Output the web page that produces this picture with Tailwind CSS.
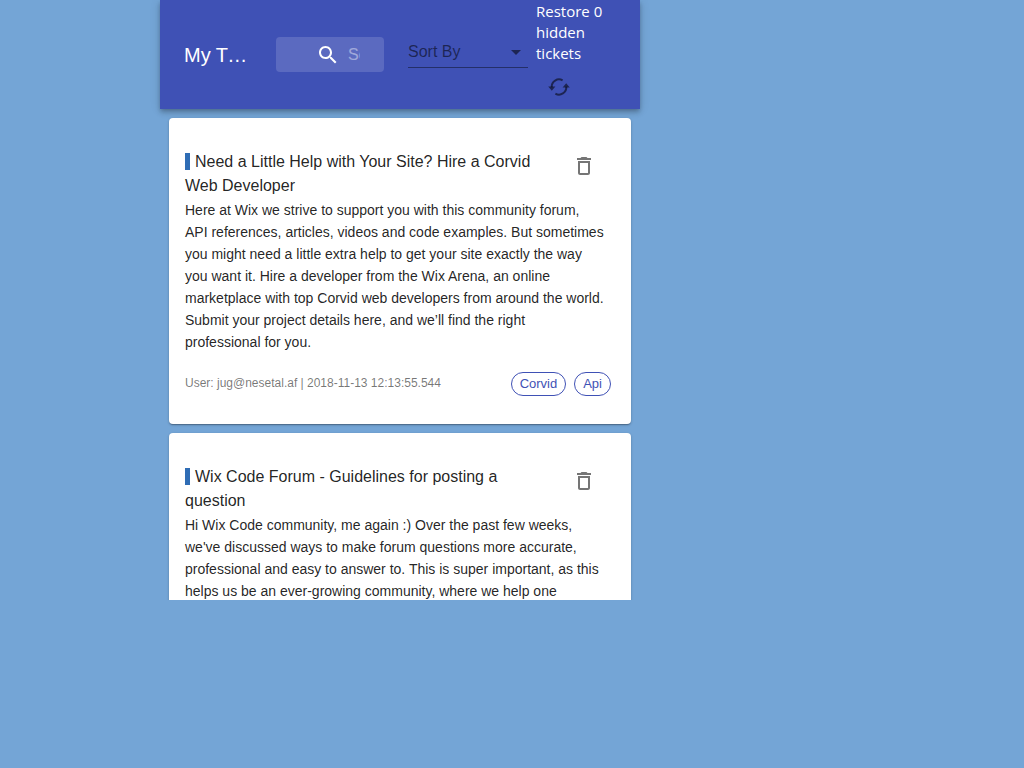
<!DOCTYPE html>
<html lang="en">
<head>
<meta charset="utf-8">
<meta name="viewport" content="width=device-width, initial-scale=1">
<title>My Tickets</title>
<script src="https://cdn.jsdelivr.net/npm/@tailwindcss/browser@4"></script>
</head>
<body class="min-h-screen bg-[#74a5d6] font-['Liberation_Sans',Arial,sans-serif] text-black/87 sm:pl-40">
<div class="max-h-[600px] w-full max-w-[480px] overflow-y-clip">
  <header class="relative z-10 flex items-center bg-[#3f51b5] px-6 text-white shadow-[0_2px_4px_-1px_rgba(0,0,0,0.2),0_4px_5px_0_rgba(0,0,0,0.14),0_1px_10px_0_rgba(0,0,0,0.12)]">
    <h1 class="w-[66px] truncate text-xl">My Tickets</h1>
    <label class="ml-[26px] flex h-[35px] min-w-0 flex-1 items-center gap-2 rounded bg-white/15 pr-6 pl-10">
      <svg class="size-6 shrink-0" viewBox="0 0 24 24" fill="currentColor" aria-hidden="true"><path d="M15.5 14h-.79l-.28-.27C15.41 12.59 16 11.11 16 9.5 16 5.91 13.09 3 9.5 3S3 5.91 3 9.5 5.91 16 9.5 16c1.61 0 3.09-.59 4.23-1.57l.27.28v.79l5 4.99L20.49 19l-4.99-5zm-6 0C7.01 14 5 11.99 5 9.5S7.01 5 9.5 5 14 7.01 14 9.5 11.99 14 9.5 14z"/></svg>
      <input type="text" aria-label="Search tickets" placeholder="Search…" class="w-0 min-w-0 flex-1 appearance-none bg-transparent text-base text-white outline-none placeholder:text-white/42">
    </label>
    <div class="relative mb-[5px] ml-6 w-[120px]">
      <select aria-label="Sort By" class="block h-8 w-full appearance-none border-b border-black/42 bg-transparent text-base text-black/54 outline-none">
        <option>Sort By</option>
      </select>
      <svg class="pointer-events-none absolute top-1 right-0 size-6 text-black/54" viewBox="0 0 24 24" fill="currentColor" aria-hidden="true"><path d="M7 10l5 5 5-5z"/></svg>
    </div>
    <div class="ml-2 w-20 pt-px font-['Open_Sans','Noto_Sans',sans-serif] text-[15px] leading-[21px]">
      <p>Restore 0 hidden tickets</p>
      <button type="button" aria-label="Restore hidden tickets" class="flex h-[45px] w-[46px] items-center justify-center rounded-full text-black/54">
        <svg class="size-[22px]" viewBox="0 0 22 22" fill="none" aria-hidden="true">
          <path d="M14.600 4.400A7.300 7.300 0 0 0 3.700 11.200M7.400 17.600A7.300 7.300 0 0 0 18.300 10.800" stroke="currentColor" stroke-width="2"/>
          <path d="M.2 10.500h7.200l-3.600 4.300zM14.600 11.500h7.200l-3.600-4.300z" fill="currentColor"/>
        </svg>
      </button>
    </div>
  </header>
  <main class="flex flex-col gap-[9px] p-[9px]">
    <article class="rounded bg-white px-4 pt-6 pb-7 shadow-[0_1px_3px_0_rgba(0,0,0,0.2),0_1px_1px_0_rgba(0,0,0,0.14),0_2px_1px_-1px_rgba(0,0,0,0.12)]">
      <div class="flex items-start">
        <h2 class="min-w-0 flex-1 pt-2 text-base"><span class="border-l-[5px] border-[#2f6db5] pl-[5px]">Need a Little Help with Your Site? Hire a Corvid<br>Web Developer</span></h2>
        <button type="button" aria-label="Delete ticket" class="mr-[7px] flex size-12 shrink-0 items-center justify-center rounded-full text-black/54">
          <svg class="size-6" viewBox="0 0 24 24" fill="currentColor" aria-hidden="true"><path d="M6 19c0 1.100.9 2 2 2h8c1.100 0 2-.9 2-2V7H6v12zM8 9h8v10H8V9zm7.500-5l-1-1h-5l-1 1H5v2h14V4z"/></svg>
        </button>
      </div>
      <p class="mt-px text-sm leading-[22px]">Here at Wix we strive to support you with this community forum,<br>API references, articles, videos and code examples. But sometimes<br>you might need a little extra help to get your site exactly the way<br>you want it. Hire a developer from the Wix Arena, an online<br>marketplace with top Corvid web developers from around the world.<br>Submit your project details here, and we’ll find the right<br>professional for you.</p>
      <footer class="mt-[19px] flex items-center justify-between pr-1">
        <p class="pb-0.5 text-xs text-black/54">User: jug@nesetal.af | 2018-11-13 12:13:55.544</p>
        <ul class="flex gap-2 text-[13px] text-[#3f51b5]">
          <li class="flex h-6 items-center rounded-full border border-[#3f51b5] px-2">Corvid</li>
          <li class="flex h-6 items-center rounded-full border border-[#3f51b5] px-2">Api</li>
        </ul>
      </footer>
    </article>
    <article class="rounded bg-white px-4 pt-6 pb-7 shadow-[0_1px_3px_0_rgba(0,0,0,0.2),0_1px_1px_0_rgba(0,0,0,0.14),0_2px_1px_-1px_rgba(0,0,0,0.12)]">
      <div class="flex items-start">
        <h2 class="min-w-0 flex-1 pt-2 text-base"><span class="border-l-[5px] border-[#2f6db5] pl-[5px]">Wix Code Forum - Guidelines for posting a<br>question</span></h2>
        <button type="button" aria-label="Delete ticket" class="mr-[7px] flex size-12 shrink-0 items-center justify-center rounded-full text-black/54">
          <svg class="size-6" viewBox="0 0 24 24" fill="currentColor" aria-hidden="true"><path d="M6 19c0 1.100.9 2 2 2h8c1.100 0 2-.9 2-2V7H6v12zM8 9h8v10H8V9zm7.500-5l-1-1h-5l-1 1H5v2h14V4z"/></svg>
        </button>
      </div>
      <p class="mt-px text-sm leading-[22px]">Hi Wix Code community, me again :) Over the past few weeks,<br>we've discussed ways to make forum questions more accurate,<br>professional and easy to answer to. This is super important, as this<br>helps us be an ever-growing community, where we help one</p>
    </article>
  </main>
</div>
</body>
</html>
